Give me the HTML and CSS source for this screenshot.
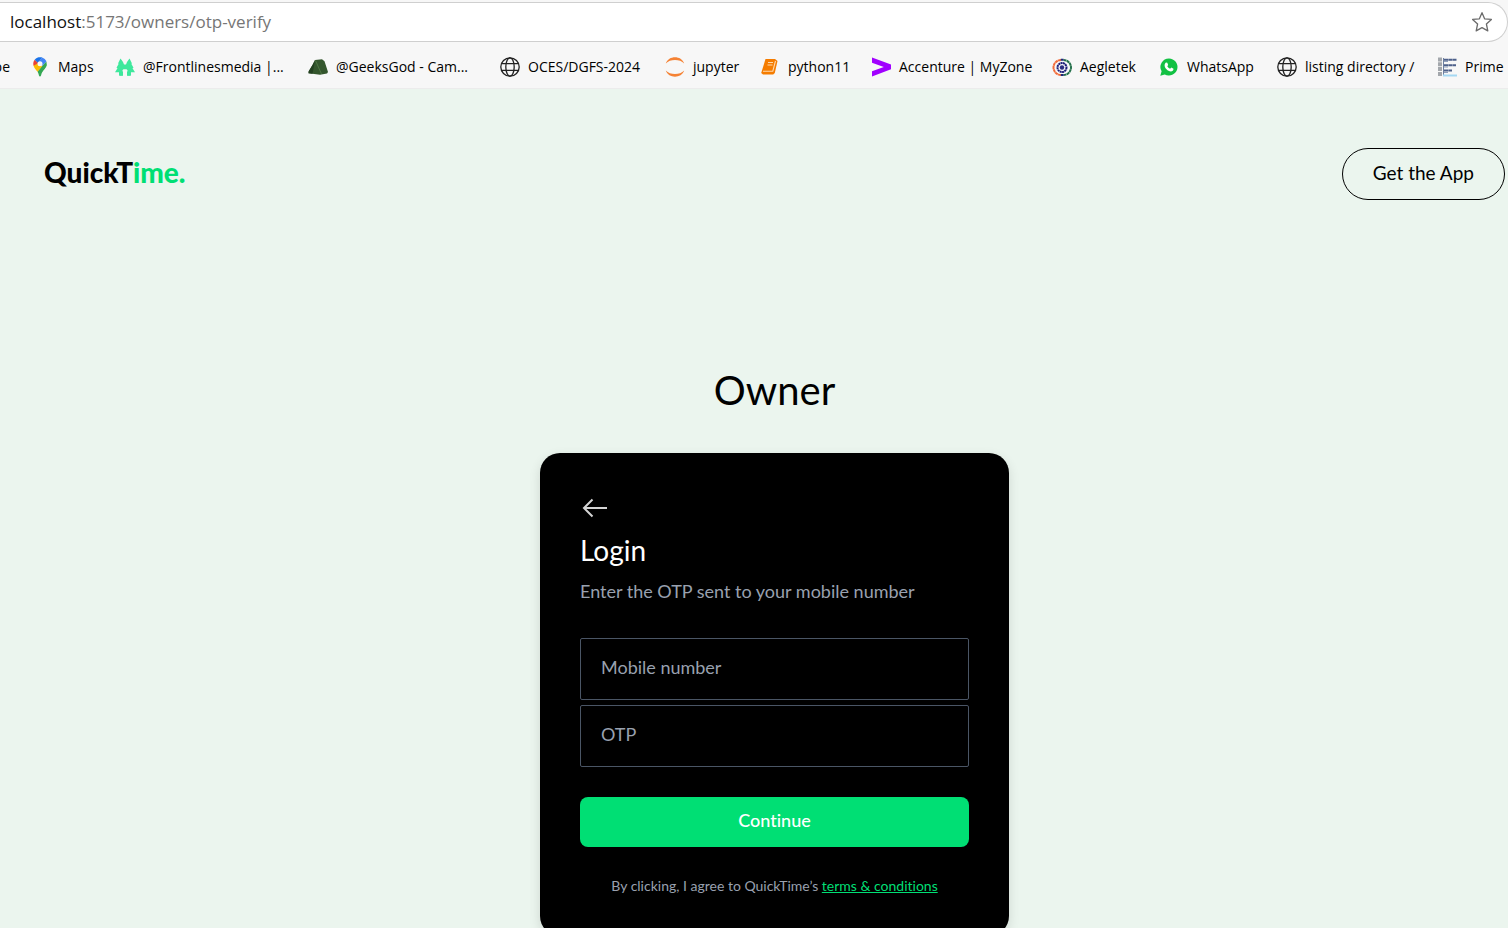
FILE: index.html
```
<!DOCTYPE html>
<html lang="en">
<head>
<meta charset="utf-8">
<title>QuickTime</title>
<link rel="stylesheet" href="styles.css">
</head>
<body>
<div class="browser">
  <div class="address">
    <span class="url"><span class="host">localhost</span>:5173/owners/otp-verify</span>
    <button class="star" type="button" aria-label="Favorite">
      <svg width="22" height="22" viewBox="0 0 22 22" fill="none" stroke="#6b6b6b" stroke-width="1.3" stroke-linejoin="round"><path d="M11 1.700l2.600 6.100 6.800.6-5 4.600 1.400 6.900L11 16.600l-5.800 3.300L6.600 13l-5-4.600 6.800-.6z"/></svg>
    </button>
  </div>
  <nav class="bookmarks" aria-label="Bookmarks">
    <a class="bookmark cut" href="#">be</a>
    <a class="bookmark" href="#">
      <svg width="20" height="20" viewBox="0 0 20 20"><path fill="#34a853" d="M16.800 7c0 4-3.800 6-5.200 9.500-.5 1.500-.5 3-1.600 3s-1.100-1.500-1.600-3L7.500 14.500z"/><path fill="#34a853" d="M16.300 4.500C18 9 13.800 11.500 12 15L8 14l4.500-5.500z"/><path fill="#fbbc04" d="M3.500 8.500c.6 2.500 2.300 4 4 6.200l5-6L8 5z"/><path fill="#ea4335" d="M4.700 2.800C3 5 3 7 3.600 8.800L8.500 6z"/><path fill="#1a73e8" d="M4.700 2.800C7 0 10 0 12.200.6L8 6z"/><path fill="#4285f4" d="M12 .5c2.200.7 3.700 2.200 4.400 4.100L12 9 8.500 5z"/><circle cx="10" cy="6.800" r="2.500" fill="#f7f7f7"/></svg>
      <span>Maps</span></a>
    <a class="bookmark" href="#">
      <svg width="20" height="20" viewBox="0 0 20 20" fill="#3ee89c"><path d="M5.500 1.500L8 5l1 2.500h2L12 5l2.500-3.500L17 6.500l-.7.300 2.200 4-1 .4L20 15.300h-4V18.500h-3.500v-5.300a2.500 2.500 0 0 0-1-.9h-3a2.500 2.500 0 0 0-1 .9v5.300H4V15.300H0l2.500-4.100-1-.4 2.200-4-.7-.3z"/><path d="M4.500 14.500H8v4.200H4.500zM12 14.500h3.500v4.200H12z"/></svg>
      <span>@Frontlinesmedia |...</span></a>
    <a class="bookmark" href="#">
      <svg width="20" height="20" viewBox="0 0 20 20"><path fill="#34562d" d="M7 3l7-.7 2.500 2L20 15l-1 1.500-7 1.300-11.500-1.500.2-2L4.500 8z"/><path fill="#234020" d="M7 3l-1 6-1.500 7.800-4-.5.2-2L4.500 8z"/><path stroke="#4d7543" d="M7.500 3.500l6 13.500" fill="none"/></svg>
      <span>@GeeksGod - Cam...</span></a>
    <a class="bookmark" href="#">
      <svg width="20" height="20" viewBox="0 0 20 20" fill="none" stroke="#222" stroke-width="1.300"><circle cx="10" cy="10" r="9.200"/><ellipse cx="10" cy="10" rx="4.200" ry="9.200"/><path d="M1.600 6.700h16.800M1.600 13.300h16.800"/></svg>
      <span>OCES/DGFS-2024</span></a>
    <a class="bookmark" href="#">
      <svg width="20" height="20" viewBox="0 0 20 20" fill="#f58234"><path d="M.8 6.500C2.300 2.300 6 .3 10 .3s7.700 2 9.200 6.200C17 4 13.600 3 10 3S3 4 .8 6.500zM.8 13.500C2.300 17.700 6 19.700 10 19.700s7.700-2 9.200-6.200C17 16 13.600 17 10 17S3 16 .8 13.500z"/></svg>
      <span>jupyter</span></a>
    <a class="bookmark" href="#">
      <svg width="20" height="20" viewBox="0 0 20 20"><path fill="#f57c00" d="M5.500 2H15l2.500 2-2.700 12-1.600 1.600H3L1.200 16z"/><path fill="none" stroke="#ffd9ad" stroke-width="1.100" d="M8 5.500h5M7.500 8h5M3 14.200h9.800L15.500 4"/></svg>
      <span>python11</span></a>
    <a class="bookmark" href="#">
      <svg width="20" height="20" viewBox="0 0 20 20" fill="#a100ff"><path d="M1 .5l19 7v4.700L1 19.500v-5.200L12.800 10 1 5.700z"/></svg>
      <span>Accenture | MyZone</span></a>
    <a class="bookmark" href="#">
      <svg width="20" height="20" viewBox="0 0 20 20" fill="none"><path stroke="#f26b3a" stroke-width="2" stroke-dasharray="3 .4" d="M9 18A7.200 7.200 0 0 1 9 3"/><path stroke="#23704a" stroke-width="2" stroke-dasharray="3 .4" d="M11.500 3a7.200 7.200 0 0 1 0 15"/><path stroke="#1d2a78" stroke-width="2" d="M8.800 2.800h2.800M8.800 18h2.800"/><circle cx="10" cy="10.500" r="4.500" stroke="#1b1d78" stroke-width="2" stroke-dasharray="2 .4"/><circle cx="10" cy="10.500" r="2.200" fill="#2b2d80"/></svg>
      <span>Aegletek</span></a>
    <a class="bookmark" href="#">
      <svg width="20" height="20" viewBox="0 0 20 20"><path fill="#12c143" d="M10 1.500a8.500 8.500 0 1 1-4.200 15.900L1.300 18.700l1.300-4.400A8.500 8.500 0 0 1 10 1.500z"/><path fill="#fff" d="M7 5.500l1.300.2.900 2.200-.9 1.300c.7 1.300 1.500 2 2.800 2.600l1.200-1.200 2.200 1.200c0 1.700-1.200 2.600-2.600 2.600-3.300-.3-6.200-3.500-6.300-6 0-1.300.6-2.200 1.400-2.900z"/></svg>
      <span>WhatsApp</span></a>
    <a class="bookmark" href="#">
      <svg width="20" height="20" viewBox="0 0 20 20" fill="none" stroke="#222" stroke-width="1.300"><circle cx="10" cy="10" r="9.200"/><ellipse cx="10" cy="10" rx="4.200" ry="9.200"/><path d="M1.600 6.700h16.800M1.600 13.300h16.800"/></svg>
      <span>listing directory /</span></a>
    <a class="bookmark" href="#">
      <svg width="20" height="20" viewBox="0 0 20 20" fill="none"><path stroke="#a3a7ac" stroke-width="4" stroke-dasharray="4 .8" d="M3 .5v19"/><path stroke="#6d7f9f" d="M6.500 1v18"/><path stroke="#4d608a" stroke-width="2" stroke-dasharray="4 .3" d="M7 2.700h12.500M7 8.200h12M7 13.500h8"/><path stroke="#8fa0bb" d="M7 4.500h4M7 10h4M7 15.500h4"/><path stroke="#a5d8f3" stroke-width="2" d="M6 18.500h14"/></svg>
      <span>Prime</span></a>
  </nav>
</div>
<div class="page">
  <header class="header">
    <a class="logo" href="#">QuickT<span class="accent">ime.</span></a>
    <button class="get-app" type="button">Get the App</button>
  </header>
  <main class="main">
    <h1 class="title">Owner</h1>
    <form class="card">
      <button class="back" type="button" aria-label="Back">
        <svg width="30" height="30" viewBox="0 0 30 30" fill="none" stroke="#d4d4d4" stroke-width="2"><path d="M4 15h23M12.500 6.500L4 15l8.500 8.500"/></svg>
      </button>
      <h2 class="heading">Login</h2>
      <p class="hint">Enter the OTP sent to your mobile number</p>
      <div class="fields">
        <input class="field" type="tel" aria-label="Mobile number" placeholder="Mobile number">
        <input class="field" type="text" aria-label="OTP" placeholder="OTP">
      </div>
      <button class="continue" type="button">Continue</button>
      <p class="terms">By clicking, I agree to QuickTime’s <a class="terms-link" href="#">terms &amp; conditions</a></p>
    </form>
  </main>
</div>
</body>
</html>
```
FILE: styles.css
```
* { box-sizing: border-box; }
body {
  margin: 0;
  min-height: 100vh;
  overflow: hidden;
  background: #ebf5ee;
  color: #000;
  font-family: Lato, sans-serif;
  font-variant-ligatures: none;
}
h1, h2, p { margin: 0; font-weight: 400; }
button { padding: 0; border: 0; background: none; font-family: inherit; font-variant-ligatures: none; cursor: pointer; }
a { color: inherit; text-decoration: none; }
svg { display: block; flex: none; }

.browser {
  padding-top: 2px;
  background: #f7f7f7;
  border-bottom: 1px solid #ececec;
  font-family: "Open Sans", sans-serif;
}
.address {
  display: flex;
  align-items: center;
  justify-content: space-between;
  height: 40px;
  padding: 0 14px 0 10px;
  border: 1px solid #cfcfcf;
  border-left: 0;
  border-radius: 0 20px 20px 0;
  background: #fff;
}
.url { padding-bottom: 2px; color: #767676; font-size: 17px; }
.host { color: #111; }
.bookmarks {
  display: grid;
  grid-template-columns: 30px 85px 193px 192px 165px 95px 111px 181px 107px 118px 160px 1fr;
  align-items: center;
  height: 46px;
  padding-top: 4px;
}
.bookmark {
  display: flex;
  align-items: center;
  gap: 8px;
  font-size: 14px;
  line-height: 20px;
  white-space: nowrap;
}
.cut { justify-content: flex-end; padding-right: 20px; }

.header {
  display: flex;
  align-items: center;
  justify-content: space-between;
  padding: 59px 3px 0 44px;
}
.logo { padding-bottom: 4px; font-size: 28px; line-height: 32px; font-weight: 900; }
.accent { color: #00df74; }
.get-app {
  height: 52px;
  padding: 0 30px 4px;
  border: 1px solid #000;
  border-radius: 26px;
  color: #000;
  font-size: 19px;
}
.main {
  display: flex;
  flex-direction: column;
  align-items: center;
  padding: 166px 0 0 41px;
}
.title { font-size: 40px; line-height: 48px; }
.card {
  display: flex;
  flex-direction: column;
  width: 469px;
  margin-top: 39px;
  padding: 40px;
  border-radius: 20px;
  background: #000;
  box-shadow: 0 4px 12px rgba(0, 0, 0, .12);
}
.back { width: 30px; height: 30px; }
.heading { margin-top: 11px; color: #fff; font-size: 28px; line-height: 32px; }
.hint { margin-top: 13px; color: #99a1af; font-size: 18px; line-height: 24px; }
.fields { display: grid; gap: 5px; margin-top: 35px; }
.field {
  width: 100%;
  height: 62px;
  padding: 0 20px 4px;
  border: 1px solid #4a5565;
  border-radius: 2px;
  background: transparent;
  color: #fff;
  font-family: inherit;
  font-size: 18px;
}
.field::placeholder { color: #99a1af; opacity: 1; }
.continue {
  height: 50px;
  margin-top: 30px;
  padding-bottom: 4px;
  border-radius: 8px;
  background: #00df74;
  color: #fff;
  font-size: 18px;
  font-weight: 500;
}
.terms { margin-top: 29px; color: #99a1af; font-size: 14px; line-height: 20px; text-align: center; }
.terms-link { color: #00df74; text-decoration: underline; }
```
